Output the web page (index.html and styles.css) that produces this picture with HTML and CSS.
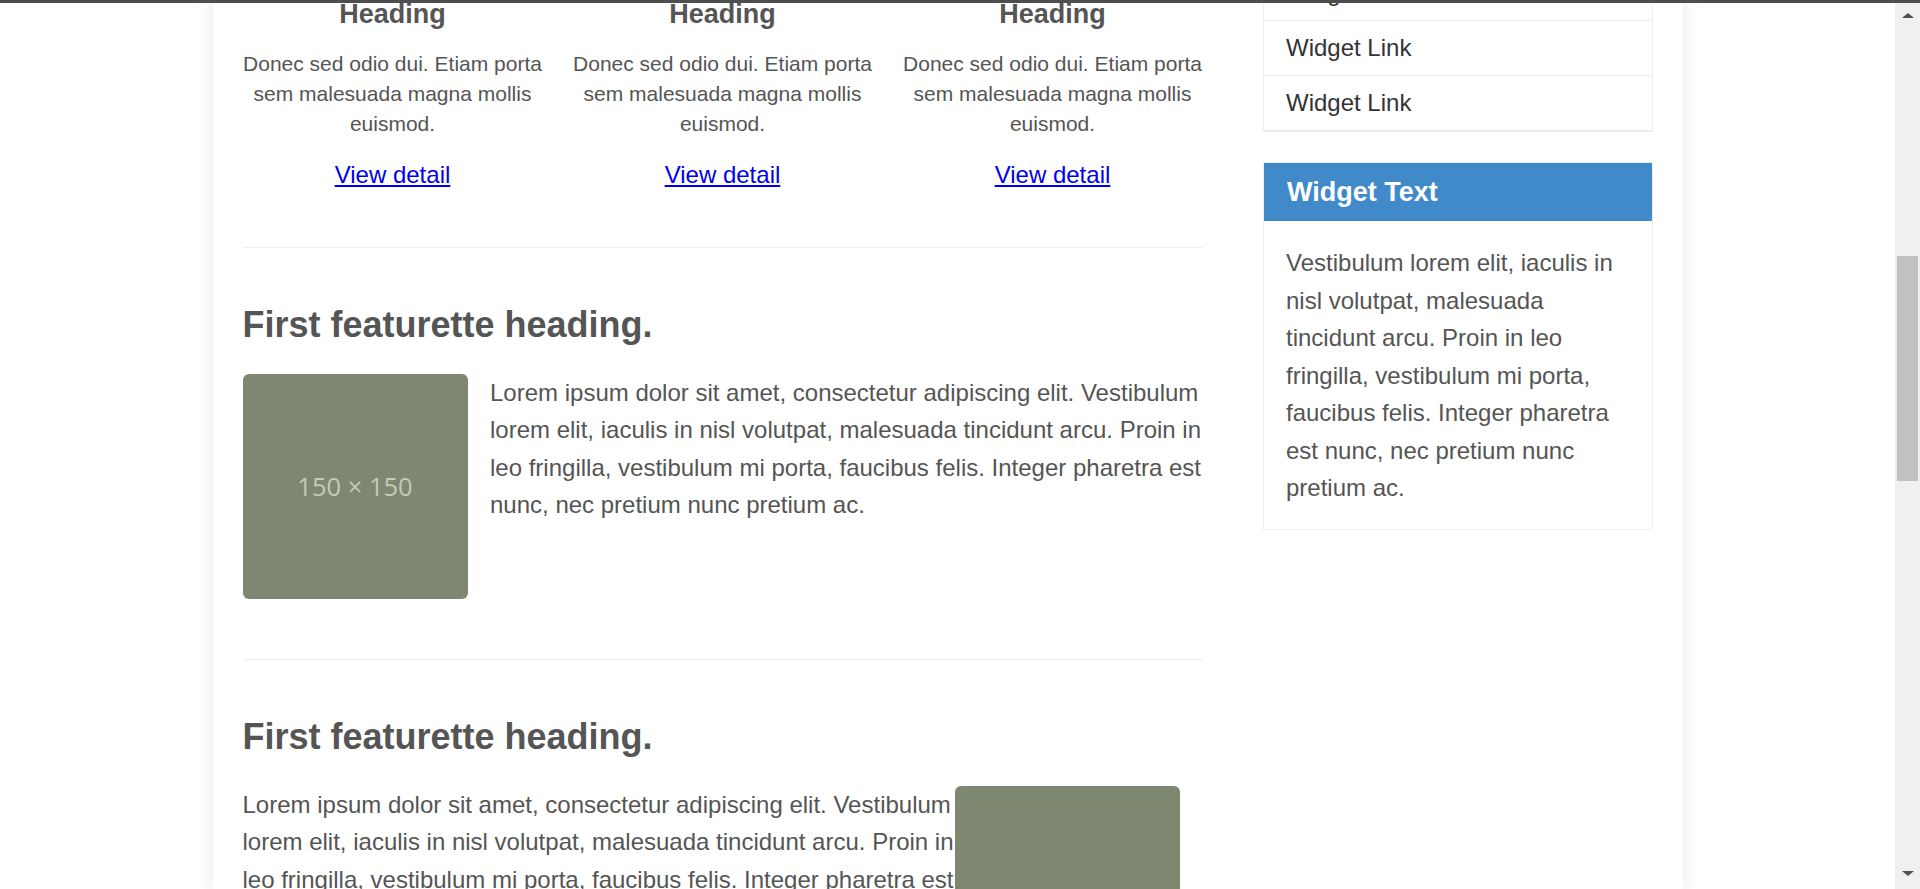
FILE: index.html
```html
<!DOCTYPE html>
<html lang="en">
<head>
<meta charset="utf-8">
<title>Featurettes</title>
<link rel="stylesheet" href="styles.css">
</head>
<body>
<div class="topbar"></div>
<div class="screen">
  <div class="page">
    <div class="container">
      <main class="main">
        <div class="cols">
          <div class="col">
            <h4 class="col-title">Heading</h4>
            <p class="col-text">Donec sed odio dui. Etiam porta sem malesuada magna mollis euismod.</p>
            <p class="more"><a href="#">View detail</a></p>
          </div>
          <div class="col">
            <h4 class="col-title">Heading</h4>
            <p class="col-text">Donec sed odio dui. Etiam porta sem malesuada magna mollis euismod.</p>
            <p class="more"><a href="#">View detail</a></p>
          </div>
          <div class="col">
            <h4 class="col-title">Heading</h4>
            <p class="col-text">Donec sed odio dui. Etiam porta sem malesuada magna mollis euismod.</p>
            <p class="more"><a href="#">View detail</a></p>
          </div>
        </div>
        <hr class="divider">
        <section class="featurette">
          <h3 class="feat-title">First featurette heading.</h3>
          <div class="media">
            <div class="ph ph-left"><span class="ph-label">150 × 150</span></div>
            <p class="feat-text">Lorem ipsum dolor sit amet, consectetur adipiscing elit. Vestibulum lorem elit, iaculis in nisl volutpat, malesuada tincidunt arcu. Proin in leo fringilla, vestibulum mi porta, faucibus felis. Integer pharetra est nunc, nec pretium nunc pretium ac.</p>
          </div>
        </section>
        <hr class="divider divider-wide">
        <section class="featurette">
          <h3 class="feat-title">First featurette heading.</h3>
          <div class="media">
            <div class="ph ph-right"><span class="ph-label">150 × 150</span></div>
            <p class="feat-text">Lorem ipsum dolor sit amet, consectetur adipiscing elit. Vestibulum lorem elit, iaculis in nisl volutpat, malesuada tincidunt arcu. Proin in leo fringilla, vestibulum mi porta, faucibus felis. Integer pharetra est nunc, nec pretium nunc pretium ac.</p>
          </div>
        </section>
      </main>
      <aside class="sidebar">
        <ul class="links">
          <li class="link-item"><a href="#">Widget Link</a></li>
          <li class="link-item"><a href="#">Widget Link</a></li>
          <li class="link-item"><a href="#">Widget Link</a></li>
        </ul>
        <div class="widget">
          <div class="widget-head">Widget Text</div>
          <div class="widget-body">
            <p class="widget-text">Vestibulum lorem elit, iaculis in nisl volutpat, malesuada tincidunt arcu. Proin in leo fringilla, vestibulum mi porta, faucibus felis. Integer pharetra est nunc, nec pretium nunc pretium ac.</p>
          </div>
        </div>
      </aside>
    </div>
  </div>
  <div class="scrollbar">
    <span class="arrow-up"></span>
    <span class="thumb"></span>
    <span class="arrow-down"></span>
  </div>
</div>
</body>
</html>
```

FILE: styles.css
```css
* { box-sizing: border-box; }

html, body {
  margin: 0;
  padding: 0;
  height: 889px;
  overflow: hidden;
  background: #ffffff;
}

body {
  font-family: "Liberation Sans", Arial, sans-serif;
  color: #555555;
}

.topbar {
  position: fixed;
  top: 0;
  left: 0;
  right: 0;
  height: 3px;
  background: #4e4e4e;
  z-index: 10;
}

.screen {
  display: flex;
  height: 889px;
}

.page {
  flex: 1;
  display: flex;
  justify-content: center;
  overflow: hidden;
}

.container {
  width: 1470px;
  padding: 0 30px;
  display: flex;
  gap: 60px;
  background: #ffffff;
  box-shadow: 0 0 16px rgba(0, 0, 0, 0.11);
  min-height: 889px;
}

.main {
  width: 960px;
  flex: none;
}

.cols {
  display: grid;
  grid-template-columns: repeat(3, 300px);
  column-gap: 30px;
  text-align: center;
}

.col-title {
  margin: 0 0 19.7px;
  font-size: 27px;
  line-height: 29.7px;
  font-weight: bold;
  color: #555555;
}

.col-text {
  margin: 0;
  font-size: 21px;
  line-height: 30px;
}

.more {
  margin: 20.6px 0 0;
  font-size: 24px;
  line-height: 30px;
}

.more a {
  color: #0000ee;
  text-decoration: underline;
}

.divider {
  margin: 57px 0 0;
  border: 0;
  border-top: 1px solid #eeeeee;
  height: 0;
}

.divider-wide {
  margin-top: 60px;
}

.featurette {
  padding-top: 57px;
}

.feat-title {
  margin: 0 0 29.4px;
  font-size: 36px;
  line-height: 39.6px;
  font-weight: bold;
  color: #555555;
}

.media::after {
  content: "";
  display: block;
  clear: both;
}

.ph {
  width: 225px;
  height: 225px;
  border-radius: 6px;
  background: #7e8871;
  display: flex;
  align-items: center;
  justify-content: center;
}

.ph-left {
  float: left;
  margin-right: 22.5px;
}

.ph-right {
  float: right;
  margin-right: 22.5px;
}

.ph-label {
  font-family: "Open Sans", "Noto Sans", sans-serif;
  font-size: 25.5px;
  color: #c4c9bb;
  white-space: nowrap;
}

.feat-text {
  margin: 0;
  font-size: 24px;
  line-height: 37.5px;
}

.sidebar {
  width: 390px;
  flex: none;
}

.links {
  list-style: none;
  margin: -35px 0 0;
  padding: 0;
  border-left: 1px solid #eeeeee;
  border-right: 1px solid #eeeeee;
  border-bottom: 2px solid #ececec;
}

.link-item {
  border-top: 1px solid #eeeeee;
  padding: 11.5px 22.5px 12.5px;
  font-size: 24px;
  line-height: 30px;
}

.link-item:first-child {
  border-top: 0;
  padding-top: 12.5px;
}

.link-item a {
  color: #333333;
  text-decoration: none;
}

.widget {
  margin-top: 30px;
  border: 1px solid #eeeeee;
}

.widget-head {
  background: #418aca;
  color: #ffffff;
  font-size: 27px;
  font-weight: bold;
  line-height: 29.7px;
  padding: 14.5px 22.5px 14px 23.5px;
}

.widget-body {
  padding: 23px 22.5px 22.5px;
}

.widget-text {
  margin: 0;
  font-size: 24px;
  line-height: 37.5px;
}

.scrollbar {
  width: 25px;
  flex: none;
  background: #f0f0f0;
  display: flex;
  flex-direction: column;
  align-items: center;
  padding-top: 13px;
}

.arrow-up {
  width: 0;
  height: 0;
  border-left: 6px solid transparent;
  border-right: 6px solid transparent;
  border-bottom: 5px solid #505050;
}

.thumb {
  margin-top: 238px;
  width: 21px;
  height: 225px;
  background: #c1c1c1;
}

.arrow-down {
  margin-top: auto;
  margin-bottom: 13px;
  width: 0;
  height: 0;
  border-left: 6px solid transparent;
  border-right: 6px solid transparent;
  border-top: 5px solid #505050;
}
```
